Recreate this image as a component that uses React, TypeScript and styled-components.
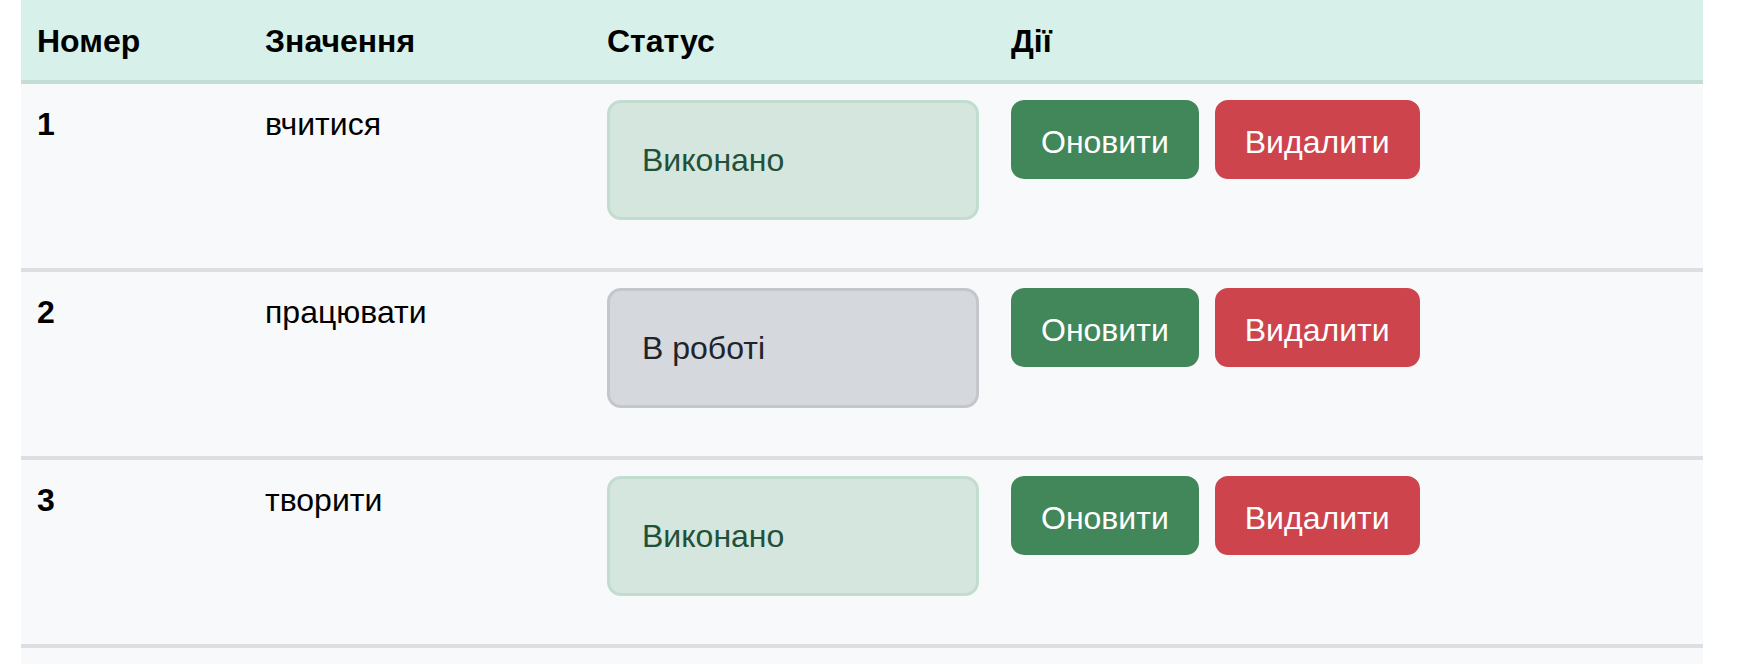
import React from "react";
import styled, { createGlobalStyle } from "styled-components";

type Status = "done" | "progress";

interface Task {
  id: number;
  value: string;
  status: Status;
}

const tasks: Task[] = [
  { id: 1, value: "вчитися", status: "done" },
  { id: 2, value: "працювати", status: "progress" },
  { id: 3, value: "творити", status: "done" },
];

const statusLabel: Record<Status, string> = {
  done: "Виконано",
  progress: "В роботі",
};

const GlobalStyle = createGlobalStyle`
  html, body {
    margin: 0;
    padding: 0;
    background: #ffffff;
  }
  body {
    font-family: "Liberation Sans", Arial, Helvetica, sans-serif;
    font-size: 32px;
    line-height: 1.5;
    color: #000;
  }
`;

const Page = styled.div`
  padding: 0 51px 0 21px;
`;

const Table = styled.table`
  width: 1682px;
  table-layout: fixed;
  border-collapse: collapse;
  line-height: 48px;
`;

const HeadRow = styled.tr`
  background: #d7f1ea;
  border-bottom: 4px solid #c3dcd4;
`;

const HeadCell = styled.th`
  padding: 17px 16px 15px;
  text-align: left;
  font-weight: 700;
  color: #000;
`;

const BodyRow = styled.tr`
  background: #f8f9fa;
  border-bottom: 4px solid #dddfe2;
`;

const Cell = styled.td<{ $bold?: boolean }>`
  padding: 16px;
  vertical-align: top;
  font-weight: ${({ $bold }) => ($bold ? 700 : 400)};
  color: #000;
`;

const StatusBox = styled.div<{ $status: Status }>`
  box-sizing: border-box;
  height: 120px;
  margin-bottom: 32px;
  padding: 33px 32px;
  line-height: 48px;
  border-radius: 14px;
  border: 3px solid
    ${({ $status }) => ($status === "done" ? "#c2ddd0" : "#c3c6cb")};
  background: ${({ $status }) => ($status === "done" ? "#d4e6dd" : "#d5d8dd")};
  color: ${({ $status }) => ($status === "done" ? "#22513a" : "#1e242a")};
`;

const Actions = styled.div`
  display: flex;
  gap: 16px;
`;

const Button = styled.button<{ $variant: "update" | "delete" }>`
  box-sizing: border-box;
  height: 79px;
  padding: 16px 28px 11px;
  font-family: inherit;
  font-size: 32px;
  line-height: 48px;
  color: #fff;
  border-radius: 13px;
  border: 2px solid
    ${({ $variant }) => ($variant === "update" ? "#41875a" : "#cd444d")};
  background: ${({ $variant }) => ($variant === "update" ? "#41875a" : "#cd444d")};
  cursor: pointer;
`;

const FillerRow = styled.tr`
  background: #f8f9fa;
  height: 60px;
`;

export default function App() {
  return (
    <>
      <GlobalStyle />
      <Page>
        <Table>
          <colgroup>
            <col style={{ width: 228 }} />
            <col style={{ width: 342 }} />
            <col style={{ width: 404 }} />
            <col style={{ width: 708 }} />
          </colgroup>
          <thead>
            <HeadRow>
              <HeadCell>Номер</HeadCell>
              <HeadCell>Значення</HeadCell>
              <HeadCell>Статус</HeadCell>
              <HeadCell>Дії</HeadCell>
            </HeadRow>
          </thead>
          <tbody>
            {tasks.map((t) => (
              <BodyRow key={t.id}>
                <Cell $bold>{t.id}</Cell>
                <Cell>{t.value}</Cell>
                <Cell>
                  <StatusBox $status={t.status}>{statusLabel[t.status]}</StatusBox>
                </Cell>
                <Cell>
                  <Actions>
                    <Button $variant="update">Оновити</Button>
                    <Button $variant="delete">Видалити</Button>
                  </Actions>
                </Cell>
              </BodyRow>
            ))}
            <FillerRow>
              <Cell colSpan={4} />
            </FillerRow>
          </tbody>
        </Table>
      </Page>
    </>
  );
}
